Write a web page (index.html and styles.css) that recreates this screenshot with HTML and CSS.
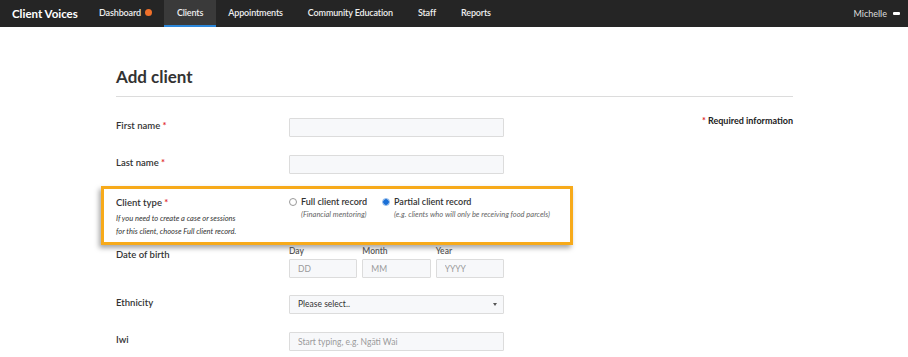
FILE: index.html
```html
<!DOCTYPE html>
<html lang="en">
<head>
<meta charset="utf-8">
<title>Add client - Client Voices</title>
<link rel="stylesheet" href="styles.css">
</head>
<body>
<header class="nav">
  <div class="brand">Client Voices</div>
  <ul class="nav-links">
    <li class="nav-item">Dashboard <span class="dot"></span></li>
    <li class="nav-item active">Clients</li>
    <li class="nav-item">Appointments</li>
    <li class="nav-item">Community Education</li>
    <li class="nav-item">Staff</li>
    <li class="nav-item">Reports</li>
  </ul>
  <div class="user">Michelle <span class="user-icon"></span></div>
</header>

<main class="page">
  <h1 class="title">Add client</h1>

  <form class="form">
    <div class="row row-first">
      <label class="label">First name <span class="req">*</span></label>
      <div class="field"><input class="input" type="text"></div>
      <div class="required-info"><span class="req">*</span> Required information</div>
    </div>

    <div class="row">
      <label class="label">Last name <span class="req">*</span></label>
      <div class="field"><input class="input" type="text"></div>
    </div>

    <div class="highlight">
      <div class="row row-type">
        <div class="label">
          Client type <span class="req">*</span>
          <p class="help">If you need to create a case or sessions<br>for this client, choose Full client record.</p>
        </div>
        <div class="radios">
          <div class="radio-opt">
            <div class="radio-line"><span class="radio"></span>Full client record</div>
            <div class="radio-help">(Financial mentoring)</div>
          </div>
          <div class="radio-opt">
            <div class="radio-line"><span class="radio checked"></span>Partial client record</div>
            <div class="radio-help">(e.g. clients who will only be receiving food parcels)</div>
          </div>
        </div>
      </div>
    </div>

    <div class="row row-dob">
      <label class="label label-dob">Date of birth</label>
      <div class="dob">
        <div class="dob-part"><span class="sub">Day</span><input class="input" type="text" placeholder="DD"></div>
        <div class="dob-part"><span class="sub">Month</span><input class="input" type="text" placeholder="MM"></div>
        <div class="dob-part"><span class="sub">Year</span><input class="input" type="text" placeholder="YYYY"></div>
      </div>
    </div>

    <div class="row">
      <label class="label">Ethnicity</label>
      <div class="field"><div class="select">Please select..<span class="caret"></span></div></div>
    </div>

    <div class="row">
      <label class="label">Iwi</label>
      <div class="field"><input class="input" type="text" placeholder="Start typing, e.g. Ngāti Wai"></div>
    </div>
  </form>
</main>
</body>
</html>
```

FILE: styles.css
```css
* { box-sizing: border-box; }
html, body { margin: 0; padding: 0; }
body {
  background: #fff;
  font-family: "Lato", "Open Sans", "Liberation Sans", sans-serif;
  color: #333;
  font-size: 10px;
}

.nav {
  display: flex;
  align-items: stretch;
  height: 27px;
  background: #252525;
  color: #fff;
}
.brand {
  display: flex;
  align-items: center;
  padding: 0 0 0 12px;
  width: 86px;
  font-weight: 700;
  font-size: 11.5px;
  white-space: nowrap;
}
.nav-links {
  display: flex;
  list-style: none;
  margin: 0;
  padding: 0;
  flex: 1;
}
.nav-item {
  display: flex;
  align-items: center;
  padding: 0 12.5px;
  font-size: 9px;
  letter-spacing: -0.15px;
  font-weight: 600;
  color: #eee;
  white-space: nowrap;
  border-bottom: 2px solid transparent;
}
.nav-item:first-child { padding-left: 13px; }
.nav-item.active {
  background: #3a3a3a;
  border-bottom-color: #2b86d9;
}
.dot {
  display: inline-block;
  width: 7px;
  height: 7px;
  border-radius: 50%;
  background: #f0702a;
  margin-left: 4px;
}
.user {
  display: flex;
  align-items: center;
  padding-right: 8px;
  font-size: 9px;
  color: #ddd;
}
.user-icon {
  display: inline-block;
  width: 7px;
  height: 3px;
  background: #fff;
  border-radius: 1px;
  margin-left: 6px;
}

.page {
  margin-left: 116px;
  width: 677px;
  padding-top: 38px;
}
.title {
  margin: 0;
  font-size: 17px;
  font-weight: 700;
  color: #333;
  line-height: 24px;
  padding-bottom: 7px;
  border-bottom: 1px solid #dcdcdc;
}

.form { padding-top: 21px; }
.row {
  display: grid;
  grid-template-columns: 173px 215px 1fr;
  margin-bottom: 18px;
}
.label {
  font-size: 9.5px;
  font-weight: 600;
  color: #333;
  padding-top: 1px;
  line-height: 14px;
}
.req { color: #e0262b; }
.required-info {
  margin-top: -4px;
  text-align: right;
  font-weight: 700;
  font-size: 9px;
  line-height: 14px;
  color: #222;
}
.input {
  display: block;
  width: 100%;
  height: 19px;
  border: 1px solid #dcdcdc;
  background: #f7f8fa;
  border-radius: 1px;
  padding: 0 8px;
  font-family: inherit;
  font-size: 8.5px;
  color: #333;
}
.input::placeholder { color: #9a9a9a; }

.highlight {
  margin: -6px 0 0 -15px;
  width: 472px;
  border: 3px solid #f7aa1a;
  padding: 6px 12px 4px;
  box-shadow: -2px 3px 5px rgba(0,0,0,0.35);
}
.row-type { margin-bottom: 0; grid-template-columns: 173px 1fr; }
.help {
  margin: 2px 0 0;
  font-style: italic;
  font-weight: 400;
  font-size: 7.5px;
  line-height: 13px;
  color: #333;
}
.radios {
  display: flex;
  gap: 15px;
}
.radio-line {
  display: flex;
  align-items: center;
  font-size: 9px;
  font-weight: 600;
  line-height: 14px;
  color: #333;
}
.radio {
  display: inline-block;
  width: 8px;
  height: 8px;
  border: 1px solid #999;
  border-radius: 50%;
  margin-right: 4px;
  background: #fff;
}
.radio.checked {
  border-color: #8db8ea;
  background: radial-gradient(circle, #1a6fd6 0 2.6px, #8db8ea 3px);
}
.radio-help {
  padding-left: 12px;
  font-style: italic;
  font-size: 7.5px;
  line-height: 12px;
  color: #666;
}

.row-dob { grid-template-columns: 173px 215px; margin-bottom: 17px; }
.label-dob { padding-top: 3px; }
.dob {
  display: grid;
  grid-template-columns: repeat(3, 1fr);
  gap: 5px;
}
.sub {
  display: block;
  font-size: 8.5px;
  font-weight: 600;
  color: #555;
  line-height: 12px;
  margin-bottom: 2px;
}
.select {
  position: relative;
  height: 19px;
  border: 1px solid #dcdcdc;
  background: #f7f8fa;
  border-radius: 1px;
  padding: 0 8px;
  font-size: 8.5px;
  line-height: 17px;
  color: #333;
}
.caret {
  position: absolute;
  right: 6px;
  top: 7px;
  width: 0;
  height: 0;
  border-left: 2.5px solid transparent;
  border-right: 2.5px solid transparent;
  border-top: 3.5px solid #555;
}
```
